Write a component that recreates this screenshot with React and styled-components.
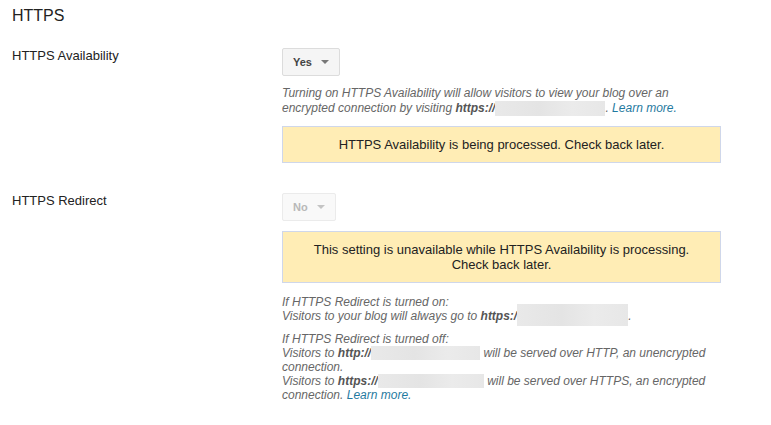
import React from 'react';
import styled, { createGlobalStyle } from 'styled-components';

const GlobalStyle = createGlobalStyle`
    * {
        box-sizing: border-box;
    }
    body {
        margin: 0;
        background-color: #FFFFFF;
        font-family: "Liberation Sans", Arial, sans-serif;
        color: #222222;
    }
`;

export default function App() {
    return (
        <Page>
            <GlobalStyle />
            <Title>HTTPS</Title>

            <Row>
                <Label>HTTPS Availability</Label>
                <Control>
                    <Dropdown>
                        Yes
                        <Caret />
                    </Dropdown>
                    <Help top="10px" lh="15px">
                        <p>
                            Turning on HTTPS Availability will allow visitors to view your blog over an
                            encrypted connection by visiting <b>https://</b>
                            <Redacted w="110px" h="15px" drop={4} />. <Link>Learn more.</Link>
                        </p>
                    </Help>
                    <Notice>HTTPS Availability is being processed. Check back later.</Notice>
                </Control>
            </Row>

            <Row space="29px">
                <Label>HTTPS Redirect</Label>
                <Control>
                    <Dropdown disabled>
                        No
                        <Caret disabled />
                    </Dropdown>
                    <Notice>
                        This setting is unavailable while HTTPS Availability is processing.
                        <br />
                        Check back later.
                    </Notice>
                    <Help top="12px" lh="14px">
                        <p>
                            If HTTPS Redirect is turned on:
                            <br />
                            Visitors to your blog will always go to <b>https:/</b>
                            <Redacted w="111px" h="22px" drop={6} lift="8px" />.
                        </p>
                        <p>
                            If HTTPS Redirect is turned off:
                            <br />
                            Visitors to <b>http://</b>
                            <Redacted w="109px" h="14px" drop={3} /> will be served over HTTP, an unencrypted
                            connection.
                            <br />
                            Visitors to <b>https://</b>
                            <Redacted w="106px" h="14px" drop={3} /> will be served over HTTPS, an encrypted
                            connection. <Link>Learn more.</Link>
                        </p>
                    </Help>
                </Control>
            </Row>
        </Page>
    );
}

// ::::::::::Styled-Components::::::::::
const Page = styled.div`
    width: 771px;
    padding: 6px 12px 20px 12px;
`;

const Title = styled.h2`
    margin: 0;
    font-size: 16px;
    line-height: 20px;
    font-weight: 400;
    color: #222222;
`;

const Row = styled.div`
    display: grid;
    grid-template-columns: 270px 439px;
    margin-top: ${(p) => p.space || '21px'};
`;

const Label = styled.div`
    padding-top: 1px;
    font-size: 13px;
    line-height: 16px;
    color: #222222;
`;

const Control = styled.div`
    display: flex;
    flex-direction: column;
    align-items: flex-start;
`;

const Dropdown = styled.div`
    margin-top: 1px;
    height: 28px;
    padding: 0 10px 0 10px;
    display: flex;
    align-items: center;
    gap: 9px;
    background-color: ${(p) => (p.disabled ? '#F9F9F9' : '#F5F5F5')};
    border: 1px solid ${(p) => (p.disabled ? '#EBEBEB' : '#DCDCDC')};
    border-radius: 2px;
    font-size: 11px;
    font-weight: 700;
    color: ${(p) => (p.disabled ? '#B8B8B8' : '#444444')};
`;

const Caret = styled.span`
    width: 0;
    height: 0;
    border-left: 4px solid transparent;
    border-right: 4px solid transparent;
    border-top: 4px solid ${(p) => (p.disabled ? '#C4C4C4' : '#777777')};
`;

const Help = styled.div`
    margin-top: ${(p) => p.top};
    width: 100%;
    font-size: 12px;
    line-height: ${(p) => p.lh};
    font-style: italic;
    color: #666666;

    p {
        margin: 0 0 9px 0;
    }
    p:last-child {
        margin-bottom: 0;
    }
    b {
        color: #555555;
    }
`;

/* blurred-out blog address; negative margins keep it from growing the line box */
const Redacted = styled.span`
    display: inline-block;
    width: ${(p) => p.w};
    height: ${(p) => p.h};
    margin-top: ${(p) => (p.lift ? `-${p.lift}` : '0')};
    margin-bottom: -5px;
    vertical-align: ${(p) => 5 - p.drop}px;
    background: linear-gradient(90deg, #E9E9E9 0%, #E4E4E4 40%, #EBEBEB 70%, #E7E7E7 100%);
`;

const Link = styled.a`
    color: #1F7AA0;
    cursor: pointer;
`;

const Notice = styled.div`
    margin-top: 10px;
    width: 100%;
    padding: 10px 12px;
    background-color: #FFEDB5;
    border: 1px solid #CFD7EA;
    font-size: 13px;
    line-height: 15px;
    text-align: center;
    color: #222222;
`;
